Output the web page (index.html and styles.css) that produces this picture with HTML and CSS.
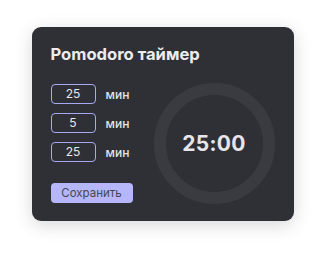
FILE: index.html
```html
<!DOCTYPE html>
<html lang="ru">
<head>
<meta charset="utf-8">
<link rel="stylesheet" href="styles.css">
</head>
<body>
<div class="card">
  <h1 class="title">Pomodoro таймер</h1>
  <div class="content">
    <div class="settings">
      <div class="row"><div class="field">25</div><span class="unit">мин</span></div>
      <div class="row"><div class="field">5</div><span class="unit">мин</span></div>
      <div class="row"><div class="field">25</div><span class="unit">мин</span></div>
      <button class="save">Сохранить</button>
    </div>
    <div class="timer">
      <div class="ring"><span class="time">25:00</span></div>
    </div>
  </div>
</div>
</body>
</html>
```
FILE: styles.css
```css
html, body { margin: 0; padding: 0; background: #ffffff; }
body {
  box-sizing: border-box;
  width: 325px; height: 257px;
  padding-top: 27px;
  display: flex; align-items: flex-start; justify-content: center;
  font-family: Inter, "Noto Sans", sans-serif;
}
.card {
  box-sizing: border-box;
  width: 262px; height: 194px;
  background: #2f3035;
  border-radius: 9px;
  box-shadow: 0 4px 18px rgba(0,0,0,0.16);
  padding: 17px 19px 0 19px;
  color: #e6e6ea;
}
.title {
  margin: 0;
  font-size: 16.6px;
  font-weight: 700;
  line-height: 20px;
  color: #ececef;
}
.content {
  display: flex;
  margin-top: 20px;
}
.settings {
  display: flex; flex-direction: column;
  width: 104px;
}
.row {
  display: flex; align-items: center;
  height: 20px; margin-bottom: 9px;
}
.field {
  box-sizing: border-box;
  width: 45px; height: 20px;
  border: 1px solid #a8a9f5;
  border-radius: 4px;
  text-align: center;
  font-size: 12px; line-height: 18px;
  color: #e8e8ec;
}
.unit {
  margin-left: 10px;
  font-size: 12px; font-weight: 500;
  color: #e4e4e8;
}
.save {
  margin-top: 12px;
  width: 82px; height: 20px;
  padding: 0;
  border: none; border-radius: 4px;
  background: #b5b6fb;
  color: #45464d;
  font-family: Inter, "Noto Sans", sans-serif;
  font-size: 11.5px;
  line-height: 20px;
}
.timer {
  flex: 1;
  display: flex; justify-content: center;
  margin-top: -1px;
  padding-left: 3px;
}
.ring {
  box-sizing: border-box;
  width: 121px; height: 121px;
  border-radius: 50%;
  border: 12px solid #3a3b40;
  display: flex; align-items: center; justify-content: center;
}
.time {
  font-size: 21px; font-weight: 700;
  color: #e6e6ea;
  letter-spacing: 0.3px;
}
```
